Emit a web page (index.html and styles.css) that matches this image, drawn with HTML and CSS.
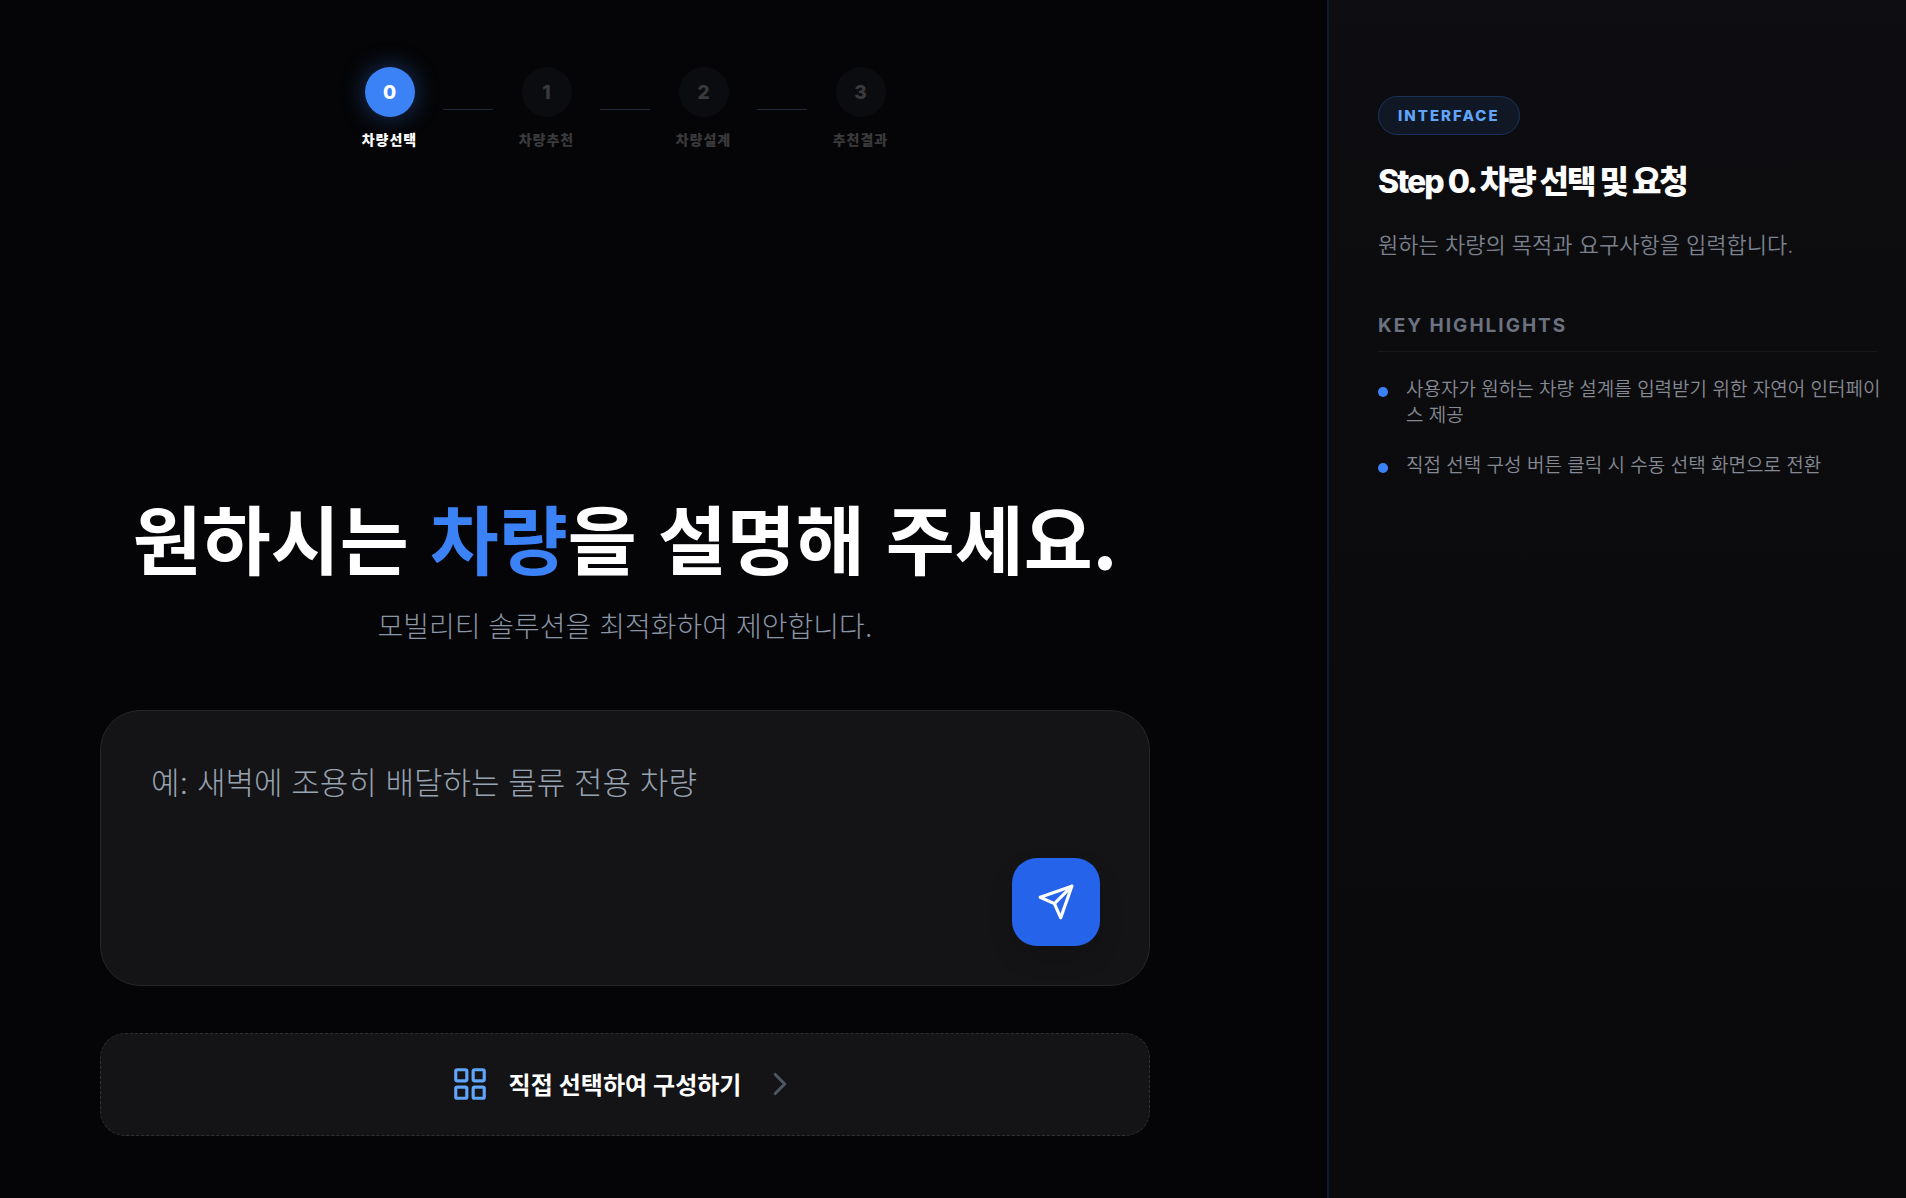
FILE: index.html
```html
<!DOCTYPE html>
<html lang="ko">
<head>
<meta charset="utf-8">
<meta name="viewport" content="width=device-width, initial-scale=1">
<title>차량 선택</title>
<link rel="stylesheet" href="styles.css">
</head>
<body>
<div class="layout">
  <main class="main">
    <ol class="steps">
      <li class="step step-active" aria-current="step"><span class="step-number">0</span><span class="step-label">차량선택</span></li>
      <li class="step-line" aria-hidden="true"></li>
      <li class="step"><span class="step-number">1</span><span class="step-label">차량추천</span></li>
      <li class="step-line" aria-hidden="true"></li>
      <li class="step"><span class="step-number">2</span><span class="step-label">차량설계</span></li>
      <li class="step-line" aria-hidden="true"></li>
      <li class="step"><span class="step-number">3</span><span class="step-label">추천결과</span></li>
    </ol>

    <section class="request">
      <h1 class="headline">원하시는 <span class="headline-accent">차량</span>을 설명해 주세요.</h1>
      <p class="subline">모빌리티 솔루션을 최적화하여 제안합니다.</p>
      <form class="prompt">
        <textarea class="prompt-input" aria-label="차량 설명" placeholder="예: 새벽에 조용히 배달하는 물류 전용 차량"></textarea>
        <button class="send" type="button" aria-label="보내기">
          <svg class="send-icon" viewBox="0 0 24 24" aria-hidden="true"><path d="M22 2 11 13"/><path d="M22 2 15 22 11 13 2 9Z"/></svg>
        </button>
      </form>
      <button class="manual" type="button">
        <svg class="manual-icon" viewBox="0 0 24 24" aria-hidden="true"><rect x="3" y="3" width="7" height="7" rx="1"/><rect x="14" y="3" width="7" height="7" rx="1"/><rect x="14" y="14" width="7" height="7" rx="1"/><rect x="3" y="14" width="7" height="7" rx="1"/></svg>
        <span>직접 선택하여 구성하기</span>
        <svg class="manual-icon manual-chevron" viewBox="0 0 24 24" aria-hidden="true"><path d="m9 18 6-6-6-6"/></svg>
      </button>
    </section>
  </main>

  <aside class="guide">
    <span class="badge">INTERFACE</span>
    <h2 class="guide-title">Step 0. 차량 선택 및 요청</h2>
    <p class="guide-text">원하는 차량의 목적과 요구사항을 입력합니다.</p>
    <h3 class="guide-heading">KEY HIGHLIGHTS</h3>
    <ul class="highlights">
      <li class="highlight">사용자가 원하는 차량 설계를 입력받기 위한 자연어 인터페이스 제공</li>
      <li class="highlight">직접 선택 구성 버튼 클릭 시 수동 선택 화면으로 전환</li>
    </ul>
  </aside>
</div>
</body>
</html>
```
FILE: styles.css
```css
* {
  box-sizing: border-box;
}

body {
  margin: 0;
  background: #050507;
  color: #fff;
  font-family: Inter, "Noto Sans CJK KR", sans-serif;
}

h1, h2, h3, p, ol, ul {
  margin: 0;
  padding: 0;
}

ol, ul {
  list-style: none;
}

button, textarea {
  font: inherit;
}

.layout {
  display: grid;
  grid-template-columns: minmax(0, 1fr) 579px;
  min-height: 100vh;
}

/* Main column */
.main {
  display: flex;
  flex-direction: column;
  padding: 67px 177px 62px 100px;
}

.steps {
  display: flex;
  justify-content: center;
  align-items: center;
  gap: 25px;
}

.step {
  display: flex;
  flex-direction: column;
  align-items: center;
  gap: 12px;
  width: 57px;
  color: #3a3a3c;
}

.step-number {
  display: grid;
  place-items: center;
  width: 50px;
  height: 50px;
  border-radius: 50%;
  background: #0b0c0f;
  font-size: 19px;
  font-weight: 800;
}

.step-label {
  font-size: 14px;
  font-weight: 800;
  line-height: 22px;
  letter-spacing: 1px;
  white-space: nowrap;
}

.step-active {
  color: #fff;
}

.step-active .step-number {
  background: #3b82f6;
  box-shadow: 0 0 25px rgba(59, 130, 246, 0.4);
}

.step-line {
  width: 50px;
  height: 1px;
  background: #1f2937;
}

.request {
  display: flex;
  flex-direction: column;
  margin-top: auto;
  padding-top: 40px;
}

.headline {
  font-family: "Noto Sans CJK KR", sans-serif;
  font-size: 75px;
  font-weight: 700;
  line-height: 92px;
  text-align: center;
}

.headline-accent {
  color: #3b82f6;
}

.subline {
  margin-top: 24px;
  color: #8a96a6;
  font-size: 28px;
  font-weight: 300;
  line-height: 40px;
  text-align: center;
}

.prompt {
  display: flex;
  flex-direction: column;
  align-items: flex-end;
  margin-top: 63px;
  padding: 50px 49px 39px 50px;
  border: 1px solid #262628;
  border-radius: 40px;
  background: #141416;
}

.prompt-input {
  width: 100%;
  height: 97px;
  padding: 0;
  border: 0;
  outline: 0;
  resize: none;
  background: transparent;
  color: #fff;
  font-size: 31px;
  font-weight: 300;
  line-height: 44px;
}

.prompt-input::placeholder {
  color: #98a2b0;
  opacity: 1;
}

.send {
  display: grid;
  place-items: center;
  width: 88px;
  height: 88px;
  padding: 0;
  border: 0;
  border-radius: 25px;
  background: #2563eb;
  box-shadow: 0 12px 24px rgba(0, 0, 0, 0.14);
}

.send-icon {
  width: 38px;
  height: 38px;
  fill: none;
  stroke: #fff;
  stroke-width: 2;
  stroke-linecap: round;
  stroke-linejoin: round;
}

.manual {
  display: flex;
  justify-content: center;
  align-items: center;
  gap: 20px;
  margin-top: 47px;
  padding-bottom: 3px;
  height: 103px;
  border: 1px dashed #303032;
  border-radius: 25px;
  background: #141416;
  color: #fff;
  font-size: 24px;
  font-weight: 600;
}

.manual-icon {
  width: 38px;
  height: 38px;
  fill: none;
  stroke: #60a5fa;
  stroke-width: 2;
  stroke-linecap: round;
  stroke-linejoin: round;
}

.manual-chevron {
  stroke: #4b5563;
}

/* Guide column */
.guide {
  padding: 96px 29px 60px 49px;
  border-left: 2px solid #0f1b2d;
  background: linear-gradient(#0d0d12, #0c0c0e 25%, #0a0a0d);
}

.badge {
  display: inline-block;
  padding: 0 19px;
  border: 1px solid #1b335c;
  border-radius: 20px;
  background: #111825;
  color: #60a5fa;
  font-size: 15px;
  font-weight: 800;
  line-height: 37px;
  letter-spacing: 2px;
}

.guide-title {
  margin-top: 25px;
  font-size: 32px;
  font-weight: 800;
  line-height: 44px;
  letter-spacing: -2px;
}

.guide-text {
  margin-top: 23px;
  color: #7b808c;
  font-size: 22px;
  font-weight: 350;
  line-height: 36px;
}

.guide-heading {
  margin-top: 49px;
  padding-bottom: 11px;
  border-bottom: 1px solid #18181a;
  color: #6b7280;
  font-size: 19px;
  font-weight: 700;
  line-height: 28px;
  letter-spacing: 2px;
}

.highlights {
  display: flex;
  flex-direction: column;
  gap: 24px;
  margin: 25px -8px 0 0;
}

.highlight {
  display: flex;
  gap: 18px;
  color: #858993;
  font-size: 19px;
  font-weight: 350;
  line-height: 26px;
  word-break: break-all;
}

.highlight::before {
  content: "";
  flex: none;
  width: 10px;
  height: 10px;
  margin-top: 10px;
  border-radius: 50%;
  background: #3b82f6;
}

@media (max-width: 1300px) {
  .layout {
    grid-template-columns: minmax(0, 1fr);
  }

  .main {
    padding: 60px 40px;
  }

  .headline {
    font-size: 48px;
    line-height: 60px;
  }
}
```
